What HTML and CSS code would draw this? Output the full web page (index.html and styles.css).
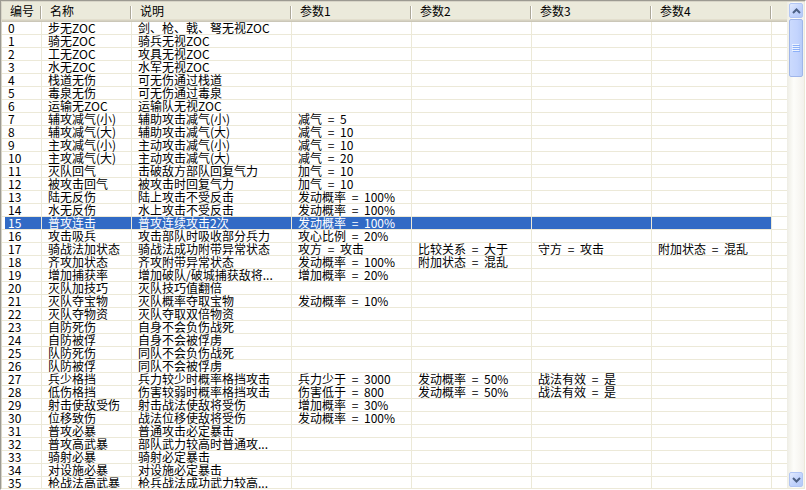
FILE: index.html
```html
<!DOCTYPE html>
<html lang="zh-CN">
<head>
<meta charset="utf-8">
<title>特技列表</title>
<link rel="stylesheet" href="styles.css">
</head>
<body>
<div class="listview">
  <div class="viewport">
    <div class="header">
      <div class="hcell">编号</div>
      <div class="hcell">名称</div>
      <div class="hcell">说明</div>
      <div class="hcell">参数1</div>
      <div class="hcell">参数2</div>
      <div class="hcell">参数3</div>
      <div class="hcell">参数4</div>
      <div class="hcell filler"></div>
    </div>
    <div class="rows">
      <div class="row"><span class="c">0</span><span class="c">步无ZOC</span><span class="c">剑、枪、戟、弩无视ZOC</span><span class="c"></span><span class="c"></span><span class="c"></span><span class="c"></span><span class="c f"></span></div>
      <div class="row"><span class="c">1</span><span class="c">骑无ZOC</span><span class="c">骑兵无视ZOC</span><span class="c"></span><span class="c"></span><span class="c"></span><span class="c"></span><span class="c f"></span></div>
      <div class="row"><span class="c">2</span><span class="c">工无ZOC</span><span class="c">攻具无视ZOC</span><span class="c"></span><span class="c"></span><span class="c"></span><span class="c"></span><span class="c f"></span></div>
      <div class="row"><span class="c">3</span><span class="c">水无ZOC</span><span class="c">水军无视ZOC</span><span class="c"></span><span class="c"></span><span class="c"></span><span class="c"></span><span class="c f"></span></div>
      <div class="row"><span class="c">4</span><span class="c">栈道无伤</span><span class="c">可无伤通过栈道</span><span class="c"></span><span class="c"></span><span class="c"></span><span class="c"></span><span class="c f"></span></div>
      <div class="row"><span class="c">5</span><span class="c">毒泉无伤</span><span class="c">可无伤通过毒泉</span><span class="c"></span><span class="c"></span><span class="c"></span><span class="c"></span><span class="c f"></span></div>
      <div class="row"><span class="c">6</span><span class="c">运输无ZOC</span><span class="c">运输队无视ZOC</span><span class="c"></span><span class="c"></span><span class="c"></span><span class="c"></span><span class="c f"></span></div>
      <div class="row"><span class="c">7</span><span class="c">辅攻减气(小)</span><span class="c">辅助攻击减气(小)</span><span class="c">减气 = 5</span><span class="c"></span><span class="c"></span><span class="c"></span><span class="c f"></span></div>
      <div class="row"><span class="c">8</span><span class="c">辅攻减气(大)</span><span class="c">辅助攻击减气(大)</span><span class="c">减气 = 10</span><span class="c"></span><span class="c"></span><span class="c"></span><span class="c f"></span></div>
      <div class="row"><span class="c">9</span><span class="c">主攻减气(小)</span><span class="c">主动攻击减气(小)</span><span class="c">减气 = 10</span><span class="c"></span><span class="c"></span><span class="c"></span><span class="c f"></span></div>
      <div class="row"><span class="c">10</span><span class="c">主攻减气(大)</span><span class="c">主动攻击减气(大)</span><span class="c">减气 = 20</span><span class="c"></span><span class="c"></span><span class="c"></span><span class="c f"></span></div>
      <div class="row"><span class="c">11</span><span class="c">灭队回气</span><span class="c">击破敌方部队回复气力</span><span class="c">加气 = 10</span><span class="c"></span><span class="c"></span><span class="c"></span><span class="c f"></span></div>
      <div class="row"><span class="c">12</span><span class="c">被攻击回气</span><span class="c">被攻击时回复气力</span><span class="c">加气 = 10</span><span class="c"></span><span class="c"></span><span class="c"></span><span class="c f"></span></div>
      <div class="row"><span class="c">13</span><span class="c">陆无反伤</span><span class="c">陆上攻击不受反击</span><span class="c">发动概率 = 100%</span><span class="c"></span><span class="c"></span><span class="c"></span><span class="c f"></span></div>
      <div class="row"><span class="c">14</span><span class="c">水无反伤</span><span class="c">水上攻击不受反击</span><span class="c">发动概率 = 100%</span><span class="c"></span><span class="c"></span><span class="c"></span><span class="c f"></span></div>
      <div class="row sel"><span class="c">15</span><span class="c">普攻连击</span><span class="c">普攻连续攻击2次</span><span class="c">发动概率 = 100%</span><span class="c"></span><span class="c"></span><span class="c"></span><span class="c f"></span></div>
      <div class="row"><span class="c">16</span><span class="c">攻击吸兵</span><span class="c">攻击部队时吸收部分兵力</span><span class="c">攻心比例 = 20%</span><span class="c"></span><span class="c"></span><span class="c"></span><span class="c f"></span></div>
      <div class="row"><span class="c">17</span><span class="c">骑战法加状态</span><span class="c">骑战法成功附带异常状态</span><span class="c">攻方 = 攻击</span><span class="c">比较关系 = 大于</span><span class="c">守方 = 攻击</span><span class="c">附加状态 = 混乱</span><span class="c f"></span></div>
      <div class="row"><span class="c">18</span><span class="c">齐攻加状态</span><span class="c">齐攻附带异常状态</span><span class="c">发动概率 = 100%</span><span class="c">附加状态 = 混乱</span><span class="c"></span><span class="c"></span><span class="c f"></span></div>
      <div class="row"><span class="c">19</span><span class="c">增加捕获率</span><span class="c">增加破队/破城捕获敌将...</span><span class="c">增加概率 = 20%</span><span class="c"></span><span class="c"></span><span class="c"></span><span class="c f"></span></div>
      <div class="row"><span class="c">20</span><span class="c">灭队加技巧</span><span class="c">灭队技巧值翻倍</span><span class="c"></span><span class="c"></span><span class="c"></span><span class="c"></span><span class="c f"></span></div>
      <div class="row"><span class="c">21</span><span class="c">灭队夺宝物</span><span class="c">灭队概率夺取宝物</span><span class="c">发动概率 = 10%</span><span class="c"></span><span class="c"></span><span class="c"></span><span class="c f"></span></div>
      <div class="row"><span class="c">22</span><span class="c">灭队夺物资</span><span class="c">灭队夺取双倍物资</span><span class="c"></span><span class="c"></span><span class="c"></span><span class="c"></span><span class="c f"></span></div>
      <div class="row"><span class="c">23</span><span class="c">自防死伤</span><span class="c">自身不会负伤战死</span><span class="c"></span><span class="c"></span><span class="c"></span><span class="c"></span><span class="c f"></span></div>
      <div class="row"><span class="c">24</span><span class="c">自防被俘</span><span class="c">自身不会被俘虏</span><span class="c"></span><span class="c"></span><span class="c"></span><span class="c"></span><span class="c f"></span></div>
      <div class="row"><span class="c">25</span><span class="c">队防死伤</span><span class="c">同队不会负伤战死</span><span class="c"></span><span class="c"></span><span class="c"></span><span class="c"></span><span class="c f"></span></div>
      <div class="row"><span class="c">26</span><span class="c">队防被俘</span><span class="c">同队不会被俘虏</span><span class="c"></span><span class="c"></span><span class="c"></span><span class="c"></span><span class="c f"></span></div>
      <div class="row"><span class="c">27</span><span class="c">兵少格挡</span><span class="c">兵力较少时概率格挡攻击</span><span class="c">兵力少于 = 3000</span><span class="c">发动概率 = 50%</span><span class="c">战法有效 = 是</span><span class="c"></span><span class="c f"></span></div>
      <div class="row"><span class="c">28</span><span class="c">低伤格挡</span><span class="c">伤害较弱时概率格挡攻击</span><span class="c">伤害低于 = 800</span><span class="c">发动概率 = 50%</span><span class="c">战法有效 = 是</span><span class="c"></span><span class="c f"></span></div>
      <div class="row"><span class="c">29</span><span class="c">射击使敌受伤</span><span class="c">射击战法使敌将受伤</span><span class="c">增加概率 = 30%</span><span class="c"></span><span class="c"></span><span class="c"></span><span class="c f"></span></div>
      <div class="row"><span class="c">30</span><span class="c">位移致伤</span><span class="c">战法位移使敌将受伤</span><span class="c">发动概率 = 100%</span><span class="c"></span><span class="c"></span><span class="c"></span><span class="c f"></span></div>
      <div class="row"><span class="c">31</span><span class="c">普攻必暴</span><span class="c">普通攻击必定暴击</span><span class="c"></span><span class="c"></span><span class="c"></span><span class="c"></span><span class="c f"></span></div>
      <div class="row"><span class="c">32</span><span class="c">普攻高武暴</span><span class="c">部队武力较高时普通攻...</span><span class="c"></span><span class="c"></span><span class="c"></span><span class="c"></span><span class="c f"></span></div>
      <div class="row"><span class="c">33</span><span class="c">骑射必暴</span><span class="c">骑射必定暴击</span><span class="c"></span><span class="c"></span><span class="c"></span><span class="c"></span><span class="c f"></span></div>
      <div class="row"><span class="c">34</span><span class="c">对设施必暴</span><span class="c">对设施必定暴击</span><span class="c"></span><span class="c"></span><span class="c"></span><span class="c"></span><span class="c f"></span></div>
      <div class="row"><span class="c">35</span><span class="c">枪战法高武暴</span><span class="c">枪兵战法成功武力较高...</span><span class="c"></span><span class="c"></span><span class="c"></span><span class="c"></span><span class="c f"></span></div>
    </div>
  </div>
  <div class="vscroll">
    <div class="sbtn">
      <div class="face">
        <svg width="9" height="6" viewBox="0 0 9 6"><path d="M1 5 L4.5 1.5 L8 5" fill="none" stroke="#4D6185" stroke-width="2"/></svg>
      </div>
    </div>
    <div class="thumb">
      <div class="face">
        <svg width="8" height="8" viewBox="0 0 8 8">
          <path d="M0 0.5H7M0 2.5H7M0 4.5H7M0 6.5H7" stroke="#EEF4FE" stroke-width="1"/>
          <path d="M1 1.5H8M1 3.5H8M1 5.5H8M1 7.5H8" stroke="#8CB0F8" stroke-width="1"/>
        </svg>
      </div>
    </div>
    <div class="track"></div>
    <div class="sbtn">
      <div class="face">
        <svg width="9" height="6" viewBox="0 0 9 6"><path d="M1 1 L4.5 4.5 L8 1" fill="none" stroke="#4D6185" stroke-width="2"/></svg>
      </div>
    </div>
  </div>
</div>
</body>
</html>
```

FILE: styles.css
```css
html, body {
  margin: 0;
  padding: 0;
  background: #ffffff;
}

body {
  width: 806px;
  height: 490px;
  overflow: hidden;
  font-family: "Noto Sans CJK SC", "Liberation Sans", sans-serif;
  font-size: 12px;
  color: #000000;
}

.listview {
  box-sizing: border-box;
  width: 806px;
  height: 490px;
  display: flex;
  border-style: solid;
  border-width: 1px;
  border-color: #9C9A92 #FFFFFF #FFFFFF #9C9A92;
  box-shadow: inset 1px 1px 0 #D8D5C8, inset -1px -1px 0 #ECE9D8;
  padding: 1px;
  background: #ffffff;
  overflow: hidden;
}

.viewport {
  flex: 1;
  min-width: 0;
  display: flex;
  flex-direction: column;
  overflow: hidden;
}

.header,
.row {
  display: grid;
  grid-template-columns: 40px 90px 160px 120px 120px 120px 120px 1fr;
}

.header {
  flex: none;
  height: 20px;
  background: linear-gradient(#EBEADB 0 17px, #E2DECD 17px 18px, #D6D2C2 18px 19px, #CBC7B8 19px 20px);
}

.hcell {
  padding-left: 8px;
  line-height: 18px;
  white-space: nowrap;
  background:
    linear-gradient(#ACA899, #ACA899) no-repeat right 1px top 4px / 1px 13px,
    linear-gradient(#FFFFFF, #FFFFFF) no-repeat right 0 top 4px / 1px 13px;
}

.hcell.filler {
  background: none;
}

.rows {
  flex: 1;
  overflow: hidden;
}

.row {
  height: 13px;
}

.c {
  box-sizing: border-box;
  height: 13px;
  padding-left: 6px;
  border-right: 1px solid #ECE9D8;
  border-bottom: 1px solid #ECE9D8;
  line-height: 12px;
  white-space: nowrap;
  word-spacing: 3px;
}

.c.f {
  border-right: none;
}

.row.sel .c {
  color: #ffffff;
  background: #316AC5;
  background-clip: padding-box;
}

.row.sel .c:first-child {
  background: linear-gradient(#316AC5, #316AC5) no-repeat 3px 0 / calc(100% - 3px) 100%;
  background-clip: padding-box;
}

.row.sel .c.f {
  color: #000000;
  background: none;
}

.vscroll {
  flex: none;
  width: 17px;
  display: flex;
  flex-direction: column;
  background: linear-gradient(90deg, #EEEDE5, #FDFDFA 40%, #F3F1EC);
}

.sbtn {
  flex: none;
  height: 17px;
  box-sizing: border-box;
  padding: 1px 1px 1px 2px;
}

.thumb {
  flex: none;
  height: 58px;
  box-sizing: border-box;
  padding: 0 1px 0 2px;
}

.face {
  box-sizing: border-box;
  height: 100%;
  border: 1px solid #B2C6F4;
  border-radius: 2px;
  background: linear-gradient(135deg, #E3EBFE, #C2D3FC 55%, #B5C9F7);
  display: flex;
  align-items: center;
  justify-content: center;
}

.thumb .face {
  border-color: #A0B6EA;
  background: linear-gradient(90deg, #CBDAFD, #C3D4FD 60%, #B8CCF8);
}

.track {
  flex: 1;
}
```
